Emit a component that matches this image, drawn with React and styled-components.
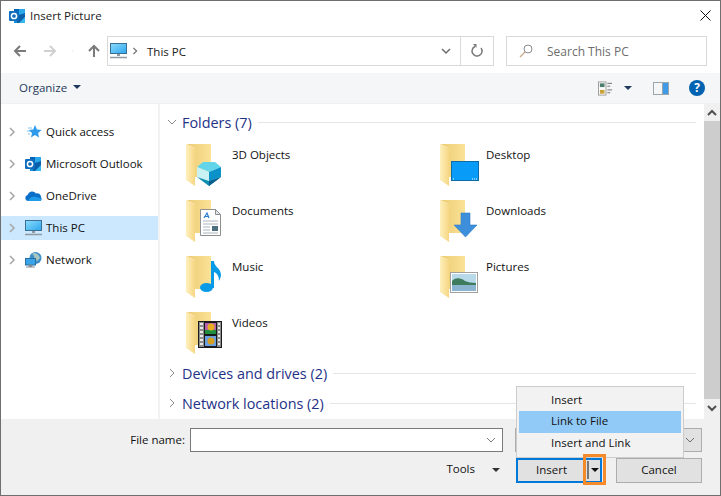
import React from 'react';
import styled, { createGlobalStyle } from 'styled-components';

const GlobalStyle = createGlobalStyle`
  html, body {
    margin: 0;
    padding: 0;
    background: #fff;
  }
  * {
    box-sizing: border-box;
  }
`;

const Dialog = styled.div`
  display: flex;
  flex-direction: column;
  width: 721px;
  height: 496px;
  overflow: hidden;
  position: relative;
  background: #fff;
  border: 1px solid #6f6f6f;
  font-family: 'Open Sans', 'Noto Sans', sans-serif;
  font-size: 11.5px;
  color: #111;
`;

const TitleBar = styled.div`
  display: flex;
  align-items: center;
  height: 30px;
  padding: 0 9px 1px 8px;
  gap: 4px;
`;

const TitleText = styled.span`
  flex: 1;
  color: #1a1a1a;
`;

const NavBar = styled.div`
  display: flex;
  align-items: center;
  height: 42px;
  padding: 0 12px 2px 11px;
`;

const NavButton = styled.span`
  display: flex;
  justify-content: center;
  align-items: center;
  width: ${props => props.$width};
  margin-left: ${props => props.$left || '0'};
`;

const AddressBox = styled.div`
  display: flex;
  align-items: center;
  width: 387px;
  height: 30px;
  margin-left: 6px;
  border: 1px solid #d9d9d9;
`;

const Crumb = styled.span`
  flex: 1;
  margin-left: 5px;
  color: #1a1a1a;
`;

const AddressTool = styled.span`
  display: flex;
  justify-content: center;
  align-items: center;
  align-self: stretch;
  width: ${props => props.$width};
  border-left: ${props => (props.$divided ? '1px solid #d9d9d9' : 'none')};
`;

const SearchBox = styled.div`
  display: flex;
  align-items: center;
  width: 201px;
  height: 30px;
  margin-left: 12px;
  padding-left: 12px;
  gap: 14px;
  border: 1px solid #d9d9d9;
  color: #6d6d6d;
  font-size: 12px;
`;

const Toolbar = styled.div`
  display: flex;
  align-items: center;
  height: 31px;
  padding: 0 15px 0 18px;
  background: #f5f6f7;
  border-bottom: 1px solid #f0f0f0;
`;

const Organize = styled.span`
  flex: 1;
  display: flex;
  align-items: center;
  gap: 6px;
  padding-bottom: 2px;
  color: #1e395b;
`;

const ToolIcons = styled.span`
  display: flex;
  align-items: center;
`;

const Caret = styled.span`
  display: inline-block;
  width: 0;
  height: 0;
  border-left: ${props => props.$size || '4px'} solid transparent;
  border-right: ${props => props.$size || '4px'} solid transparent;
  border-top: ${props => props.$size || '4px'} solid ${props => props.$color || '#1e395b'};
`;

const HelpBadge = styled.span`
  display: flex;
  justify-content: center;
  align-items: center;
  width: 16px;
  height: 16px;
  margin-left: 20px;
  border-radius: 50%;
  background: #0063b1;
  color: #fff;
  font-weight: 700;
  font-size: 12px;
  line-height: 1;
`;

const PaneIcon = styled.svg`
  margin-left: 10px;
`;

const Body = styled.div`
  flex: 1;
  display: flex;
  min-height: 0;
`;

const Sidebar = styled.div`
  display: flex;
  flex-direction: column;
  gap: 8px;
  width: 159px;
  padding-top: 16px;
  border-right: 2px solid #f3f3f3;
`;

const NavRow = styled.div`
  display: flex;
  align-items: center;
  height: 24px;
  padding-left: 6px;
  background: ${props => (props.$active ? '#cce8ff' : 'transparent')};
`;

const RowLabel = styled.span`
  margin: 0 0 2px 4px;
  color: #111;
  white-space: nowrap;
`;

const Main = styled.div`
  flex: 1;
  padding: 8px 8px 0 7px;
  min-width: 0;
`;

const GroupHeader = styled.div`
  display: flex;
  align-items: center;
  height: 20px;
  margin-top: ${props => props.$top || '0'};
  gap: 5px;
  color: #1e3287;
  font-size: 14.4px;
`;

const GroupRule = styled.span`
  flex: 1;
  height: 1px;
  margin-left: 1px;
  background: #e5e5e5;
`;

const FolderGrid = styled.div`
  display: grid;
  grid-template-columns: 254px 254px;
  grid-auto-rows: 48px;
  row-gap: 8px;
  margin: 11px 0 4px;
  padding-left: 18px;
`;

const FolderItem = styled.div`
  display: flex;
  align-items: flex-start;
  gap: 3px;
`;

const FolderName = styled.span`
  margin-top: 4px;
  color: #111;
`;

const Scrollbar = styled.div`
  display: flex;
  flex-direction: column;
  width: 16px;
  background: #f0f0f0;
`;

const ScrollButton = styled.span`
  display: flex;
  justify-content: center;
  align-items: center;
  height: 17px;
`;

const ScrollThumb = styled.span`
  height: 278px;
  background: #cdcdcd;
`;

const Footer = styled.div`
  display: flex;
  flex-direction: column;
  height: 76px;
  padding: 9px 18px 0 0;
  gap: 6px;
  background: #f0f0f0;
`;

const FooterRow = styled.div`
  display: flex;
  align-items: center;
  height: 24px;
`;

const FileLabel = styled.span`
  width: 189px;
  padding: 0 5px 1px 0;
  text-align: right;
  color: #111;
`;

const ComboBox = styled.span`
  display: flex;
  justify-content: flex-end;
  align-items: center;
  width: ${props => props.$width};
  height: 24px;
  margin-left: ${props => props.$left || '0'};
  padding-right: 6px;
  background: ${props => props.$bg || '#fff'};
  border: 1px solid ${props => props.$border || '#7a7a7a'};
`;

const ToolsButton = styled.span`
  display: flex;
  align-items: center;
  justify-content: flex-end;
  width: 515px;
  gap: 17px;
  padding-right: 16px;
  color: #111;
`;

const ToolsLabel = styled.span`
  margin-bottom: 3px;
`;

const Button = styled.span`
  display: flex;
  align-items: center;
  width: 86px;
  height: 25px;
  background: #e1e1e1;
  border: ${props => (props.$primary ? '2px solid #0078d7' : '1px solid #adadad')};
  justify-content: ${props => (props.$primary ? 'flex-start' : 'center')};
  color: #111;
`;

const ButtonText = styled.span`
  margin-bottom: 2px;
`;

const InsertLabel = styled(ButtonText)`
  width: 67px;
  text-align: center;
`;

const SplitRule = styled.span`
  width: 2px;
  height: 18px;
  margin-left: 2px;
  background: #777;
`;

const SplitArrow = styled.span`
  display: flex;
  margin-left: 2px;
`;

const CancelButton = styled(Button)`
  margin-left: 14px;
`;

const Menu = styled.div`
  position: absolute;
  left: 515px;
  top: 385px;
  display: flex;
  flex-direction: column;
  width: 168px;
  height: 72px;
  padding: 3px 2px;
  background: #f2f2f2;
  border: 1px solid #cccccc;
`;

const MenuItem = styled.div`
  display: flex;
  align-items: center;
  height: 22px;
  padding: 0 0 2px 32px;
  color: #111;
  background: ${props => (props.$active ? '#91c9f7' : 'transparent')};
`;

const Callout = styled.span`
  position: absolute;
  left: 582px;
  top: 453px;
  width: 23px;
  height: 31px;
  border: 3px solid #f58a2a;
`;

const Chevron = ({ dir = 'right', color = '#a6a6a6', size = 10, width = 1.5 }) => {
  const points = {
    right: '3,1 7,5 3,9',
    down: '1,3 5,7 9,3',
    up: '1,7 5,3 9,7',
  }[dir];
  return (
    <svg width={size} height={size} viewBox="0 0 10 10">
      <polyline points={points} fill="none" stroke={color} strokeWidth={width} />
    </svg>
  );
};

const Arrow = ({ dir, color }) => {
  const rotate = { left: 0, right: 180, up: 90 }[dir];
  return (
    <svg width="14" height="14" viewBox="0 0 14 14">
      <g transform={`rotate(${rotate} 7 7)`} fill="none" stroke={color} strokeWidth="2">
        <path d="M13 7H2" />
        <path d="M7 2L2 7l5 5" />
      </g>
    </svg>
  );
};

const OutlookIcon = () => (
  <svg width="17" height="16" viewBox="0 0 17 16">
    <path d="M5 1h11v14H5z" fill="#1490df" />
    <path d="M10 1h6v5h-6z" fill="#28a8ea" />
    <path d="M5 1h5v5H5z" fill="#0364b8" />
    <path d="M8 8l8-3v10H8z" fill="#0a5fa8" />
    <path d="M10 15l6-6v6z" fill="#35b8f1" />
    <rect x="0" y="3" width="10" height="10" rx="1" fill="#0f6cbd" />
    <circle cx="5" cy="8" r="2.6" fill="none" stroke="#fff" strokeWidth="1.5" />
  </svg>
);

const StarIcon = () => (
  <svg width="17" height="16" viewBox="0 0 17 16">
    <path d="M10 1l2 4.400 4.600.5-3.500 3 1 4.600-4.100-2.400-4 2.400 1-4.600-3.400-3 4.600-.5z" fill="#2f9bec" />
    <path d="M3 4h4M2 7h3M3 10h2" stroke="#7cc4f5" strokeWidth="1" />
  </svg>
);

const CloudIcon = () => (
  <svg width="17" height="16" viewBox="0 0 17 16">
    <path d="M3 13a3 3 0 0 1-.4-5.900A4.600 4.600 0 0 1 11 5.600a3.700 3.700 0 0 1 5 3.700A2.200 2.200 0 0 1 15 13z" fill="#0a6fc9" />
    <path d="M3 13c1-3 4-5 8-4 2 .4 4 1 5 1.400 .4 1.500-.4 2.600-1.500 2.600z" fill="#1f9be8" />
  </svg>
);

const MonitorIcon = () => (
  <svg width="17" height="16" viewBox="0 0 17 16">
    <defs>
      <linearGradient id="screen" x1="0" y1="0" x2="1" y2="1">
        <stop offset="0" stopColor="#8ddcfb" />
        <stop offset="1" stopColor="#2ba6ee" />
      </linearGradient>
    </defs>
    <rect x="0.500" y="0.500" width="16" height="10" fill="url(#screen)" stroke="#3c6f96" />
    <path d="M7 11h3v2H7z" fill="#8f9aa3" />
    <path d="M0 14.500h17" stroke="#8f9aa3" strokeWidth="1.500" />
  </svg>
);

const NetworkIcon = () => (
  <svg width="17" height="16" viewBox="0 0 17 16">
    <circle cx="10.500" cy="6" r="6" fill="#3f8fc9" />
    <path d="M7 2c2 1 3 3 2 5l3 2 3-3c-1-3-3-5-6-5z" fill="#a9c7c0" />
    <rect x="0.500" y="6.500" width="10" height="6.500" fill="#3aa4ea" stroke="#2a6f9f" />
    <path d="M4 13h3v1.500H4zM1 15h9" stroke="#7f8d98" fill="#7f8d98" />
  </svg>
);

const SmallOverlay = {
  cube: (
    <g>
      <path d="M12 24l6-5h12l6 5-12 5z" fill="#62d5ea" />
      <path d="M12 24l12 5v9l-12-4z" fill="#c8f1f3" />
      <path d="M36 24l-12 5v9l12-4z" fill="#0b93c9" />
      <path d="M12 34l12 4 12-4-12 9z" fill="#0c8fb0" />
      <path d="M24 38l12-4-12 9z" fill="#0b5f8f" />
    </g>
  ),
  desktop: (
    <g>
      <rect x="12.500" y="18.500" width="27" height="19" fill="#089cf8" stroke="#0d6ba8" />
      <path d="M14 36h1M33 36h5" stroke="#fff" strokeDasharray="1 1" />
    </g>
  ),
  document: (
    <g>
      <path d="M15.500 10.500h15l5 5v21h-20z" fill="#fff" stroke="#8f8f8f" />
      <path d="M30.500 10.500v5h5z" fill="#dfe6ee" stroke="#8f8f8f" />
      <path d="M19 19l3-5 2 5M20 17.500h3" fill="none" stroke="#2a7bd4" strokeWidth="1.200" />
      <path d="M18 22h15M18 25h15M18 28h7M18 31h7M18 34h15" stroke="#a8b4bd" />
      <rect x="27" y="27" width="6" height="5" fill="#4d6f80" />
    </g>
  ),
  download: (
    <path d="M22 14h9v12h7L26.500 38 15 26h7z" fill="#3d8fdc" stroke="#2f7cc7" strokeWidth="0.600" />
  ),
  music: (
    <g fill="#0a9be8">
      <ellipse cx="21.500" cy="32.500" rx="6.500" ry="4.500" />
      <path d="M26 6h3c0 6 7 7 7 14 0 2-1 4-2 6 0-5-2-8-5-9v16h-3z" />
    </g>
  ),
  picture: (
    <g>
      <rect x="11.500" y="17.500" width="27" height="20" fill="#fff" stroke="#a0a0a0" />
      <rect x="13" y="19" width="24" height="17" fill="#b8d9ea" />
      <path d="M13 26c4-4 9-3 13 0 3 1 7 2 11 2v2H13z" fill="#3f7c5e" />
      <rect x="13" y="30" width="24" height="6" fill="#8ab4cf" />
    </g>
  ),
  video: (
    <g>
      <rect x="13" y="10" width="24" height="27" fill="#1a1a1a" />
      <rect x="14" y="11" width="5" height="25" fill="#8c8c8c" />
      <rect x="32" y="11" width="4" height="25" fill="#8c8c8c" />
      <path d="M15 13h3M15 17h3M15 21h3M15 25h3M15 29h3M15 33h3M33 13h2M33 17h2M33 21h2M33 25h2M33 29h2M33 33h2" stroke="#e8e8e8" strokeWidth="2" />
      <rect x="20" y="12" width="11" height="11" fill="#b85fb0" />
      <path d="M20 19h11v4H20z" fill="#1f8f3f" />
      <circle cx="26" cy="16" r="3.500" fill="#e8b020" />
      <rect x="20" y="25" width="11" height="10" fill="#6aa0e0" />
      <circle cx="26" cy="30" r="3.500" fill="#d8a020" />
    </g>
  ),
};

const FolderIcon = ({ overlay, id }) => (
  <svg width="44" height="44" viewBox="0 0 44 44">
    <defs>
      <linearGradient id={`back-${id}`} x1="0" y1="0" x2="1" y2="0">
        <stop offset="0" stopColor="#eccb74" />
        <stop offset="1" stopColor="#fbe296" />
      </linearGradient>
      <linearGradient id={`front-${id}`} x1="0" y1="0" x2="1" y2="0">
        <stop offset="0" stopColor="#fef0bc" />
        <stop offset="1" stopColor="#f6d683" />
      </linearGradient>
    </defs>
    <path d="M1 1h25v33H10V5z" fill={`url(#back-${id})`} />
    <path d="M1 1l9 4v38l-9-6z" fill={`url(#front-${id})`} />
    {SmallOverlay[overlay]}
  </svg>
);

const places = [
  { label: 'Quick access', icon: <StarIcon /> },
  { label: 'Microsoft Outlook', icon: <OutlookIcon /> },
  { label: 'OneDrive', icon: <CloudIcon /> },
  { label: 'This PC', icon: <MonitorIcon />, active: true },
  { label: 'Network', icon: <NetworkIcon /> },
];

const folders = [
  { name: '3D Objects', overlay: 'cube' },
  { name: 'Desktop', overlay: 'desktop' },
  { name: 'Documents', overlay: 'document' },
  { name: 'Downloads', overlay: 'download' },
  { name: 'Music', overlay: 'music' },
  { name: 'Pictures', overlay: 'picture' },
  { name: 'Videos', overlay: 'video' },
];

const App = () => (
  <>
    <GlobalStyle />
    <Dialog>
      <TitleBar>
        <OutlookIcon />
        <TitleText>Insert Picture</TitleText>
        <svg width="11" height="11" viewBox="0 0 11 11">
          <path d="M.5.500l10 10M10.500.500l-10 10" stroke="#111" />
        </svg>
      </TitleBar>

      <NavBar>
        <NavButton $width="16px"><Arrow dir="left" color="#7a7a7a" /></NavButton>
        <NavButton $width="44px"><Arrow dir="right" color="#d0d0d0" /></NavButton>
        <NavButton $width="2px"><Chevron dir="down" color="#9a9a9a" size={8} /></NavButton>
        <NavButton $width="14px" $left="13px"><Arrow dir="up" color="#7a7a7a" /></NavButton>
        <AddressBox>
          <NavButton $width="20px"><MonitorIcon /></NavButton>
          <NavButton $width="14px"><Chevron color="#6d6d6d" size={8} /></NavButton>
          <Crumb>This PC</Crumb>
          <AddressTool $width="28px"><Chevron dir="down" color="#6d6d6d" /></AddressTool>
          <AddressTool $width="33px" $divided>
            <svg width="14" height="14" viewBox="0 0 14 14">
              <path d="M5 2.500A5 5 0 1 0 11 4" fill="none" stroke="#7a7a7a" strokeWidth="1.500" />
              <path d="M3 0h3.500v4z" fill="#7a7a7a" />
            </svg>
          </AddressTool>
        </AddressBox>
        <SearchBox>
          <svg width="14" height="14" viewBox="0 0 14 14">
            <circle cx="9" cy="5" r="4" fill="none" stroke="#8a8a8a" />
            <path d="M6 8l-5 5" stroke="#c9a98a" strokeWidth="1.200" />
          </svg>
          Search This PC
        </SearchBox>
      </NavBar>

      <Toolbar>
        <Organize>Organize <Caret /></Organize>
        <ToolIcons>
          <svg width="15" height="15" viewBox="0 0 16 15">
            <rect x="0.500" y="0.500" width="8" height="14" fill="#fff" stroke="#9a9a9a" />
            <rect x="2" y="2" width="5" height="4" fill="#4c7f6c" />
            <rect x="2" y="9" width="5" height="4" fill="#c9a23a" />
            <path d="M10 2h5M10 5h3M10 9h5M10 12h3" stroke="#6d6d6d" />
          </svg>
          <NavButton $width="30px"><Caret /></NavButton>
          <PaneIcon width="16" height="13" viewBox="0 0 16 13">
            <rect x="0" y="0" width="16" height="13" fill="#9aa5ad" />
            <rect x="1" y="1" width="8" height="11" fill="#f5f6f7" />
            <rect x="10" y="1" width="5" height="11" fill="#3f9be8" />
          </PaneIcon>
          <HelpBadge>?</HelpBadge>
        </ToolIcons>
      </Toolbar>

      <Body>
        <Sidebar>
          {places.map(place => (
            <NavRow key={place.label} $active={place.active}>
              <Chevron />
              <NavButton $width="17px" $left="8px">{place.icon}</NavButton>
              <RowLabel>{place.label}</RowLabel>
            </NavRow>
          ))}
        </Sidebar>
        <Main>
          <GroupHeader>
            <Chevron dir="down" color="#8a8a8a" width={1} />
            Folders (7)
            <GroupRule />
          </GroupHeader>
          <FolderGrid>
            {folders.map(folder => (
              <FolderItem key={folder.name}>
                <FolderIcon overlay={folder.overlay} id={folder.overlay} />
                <FolderName>{folder.name}</FolderName>
              </FolderItem>
            ))}
          </FolderGrid>
          <GroupHeader>
            <Chevron color="#8a8a8a" width={1} />
            Devices and drives (2)
            <GroupRule />
          </GroupHeader>
          <GroupHeader $top="10px">
            <Chevron color="#8a8a8a" width={1} />
            Network locations (2)
            <GroupRule />
          </GroupHeader>
        </Main>
        <Scrollbar>
          <ScrollButton><Chevron dir="up" color="#505050" width={2} /></ScrollButton>
          <ScrollThumb />
          <ScrollButton><Chevron dir="down" color="#505050" width={2} /></ScrollButton>
        </Scrollbar>
      </Body>

      <Footer>
        <FooterRow>
          <FileLabel>File name:</FileLabel>
          <ComboBox $width="313px"><Chevron dir="down" color="#7a7a7a" width={1} /></ComboBox>
          <ComboBox $width="187px" $left="12px" $bg="#e1e1e1" $border="#adadad">
            <Chevron dir="down" color="#6d6d6d" width={1} />
          </ComboBox>
        </FooterRow>
        <FooterRow>
          <ToolsButton><ToolsLabel>Tools</ToolsLabel> <Caret $color="#333" /></ToolsButton>
          <Button $primary>
            <InsertLabel>Insert</InsertLabel>
            <SplitRule />
            <SplitArrow><Caret $color="#111" $size="4.5px" /></SplitArrow>
          </Button>
          <CancelButton><ButtonText>Cancel</ButtonText></CancelButton>
        </FooterRow>
      </Footer>

      <Menu>
        <MenuItem>Insert</MenuItem>
        <MenuItem $active>Link to File</MenuItem>
        <MenuItem>Insert and Link</MenuItem>
      </Menu>
      <Callout />
    </Dialog>
  </>
);

export default App;
